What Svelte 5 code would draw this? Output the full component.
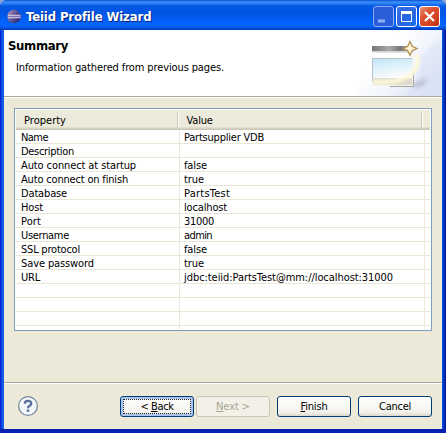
<script>
  const rows = [
    ['Name', 27, 'Partsupplier VDB', 80],
    ['Description', 53, '', 0],
    ['Auto connect at startup', 115, 'false', 23],
    ['Auto connect on finish', 107, 'true', 20],
    ['Database', 46, 'PartsTest', 46],
    ['Host', 22, 'localhost', 43],
    ['Port', 20, '31000', 30],
    ['Username', 48, 'admin', 28],
    ['SSL protocol', 59, 'false', 23],
    ['Save password', 73, 'true', 20],
    ['URL', 19, 'jdbc:teiid:PartsTest@mm://localhost:31000', 209],
    ['', 0, '', 0],
    ['', 0, '', 0],
    ['', 0, '', 0]
  ];

  // Tightens the tracking of a label so that it takes the given width.
  function fit(node, width) {
    const natural = node.getBoundingClientRect().width;
    const count = node.textContent.length;
    if (count && width) node.style.letterSpacing = (width - natural) / count + 'px';
  }
</script>

<div class="window">
  <header class="titlebar">
    <svg class="logo" width="15" height="15" viewBox="0 0 15 15">
      <defs>
        <linearGradient id="ball" x1="0" y1="0" x2="1" y2="0.6">
          <stop offset="0" stop-color="#c9a8c0" />
          <stop offset="0.4" stop-color="#75649f" />
          <stop offset="1" stop-color="#2c2877" />
        </linearGradient>
      </defs>
      <circle cx="7" cy="7.5" r="6.7" fill="url(#ball)" />
      <path d="M1 6.2H13.6M1 8.8H13.6" stroke="#e4e0f4" stroke-width="1.1" />
      <path d="M.5 7.5H14" stroke="#7970b5" stroke-width="1" />
    </svg>
    <span class="caption"><span use:fit={125}>Teiid Profile Wizard</span></span>
    <div class="controls">
      <span class="ctl dim"><svg width="19" height="19"><path d="M4 12.5h7v3H4z" fill="#8fb0f4" /></svg></span>
      <span class="ctl"><svg width="19" height="19"><path d="M4.5 5h10v9.5h-10z" fill="none" stroke="#fff" /><path d="M4 4h11v3H4z" fill="#fff" /></svg></span>
      <span class="ctl close"><svg width="19" height="19"><path d="M5 5L14 14M14 5L5 14" stroke="#fff" stroke-width="2.2" /></svg></span>
    </div>
  </header>

  <main>
    <section class="banner">
      <div class="words">
        <h1><span use:fit={60}>Summary</span></h1>
        <p><span use:fit={208}>Information gathered from previous pages.</span></p>
      </div>
      <svg class="art" width="88" height="66" viewBox="354 30 88 66">
        <defs>
          <linearGradient id="sweep" x1="0.1" y1="0.1" x2="1" y2="0.7">
            <stop offset="0.3" stop-color="#fff" />
            <stop offset="0.65" stop-color="#f1f4fc" />
            <stop offset="1" stop-color="#dde4f5" />
          </linearGradient>
          <linearGradient id="bar">
            <stop offset="0" stop-color="#777" />
            <stop offset="0.45" stop-color="#aaa" />
            <stop offset="0.75" stop-color="#777" />
            <stop offset="1" stop-color="#c8c4b4" />
          </linearGradient>
          <linearGradient id="pane" x1="0" y1="0" x2="0.3" y2="1">
            <stop offset="0" stop-color="#c2e6f5" />
            <stop offset="1" stop-color="#fbfdfe" />
          </linearGradient>
          <filter id="soft" x="-30%" y="-30%" width="160%" height="160%"><feGaussianBlur stdDeviation="2" /></filter>
          <filter id="less" x="-20%" y="-30%" width="140%" height="160%"><feGaussianBlur stdDeviation="1" /></filter>
        </defs>
        <path d="M354 30H442V96H354Z" fill="url(#sweep)" />
        <path d="M420 60Q428 44 448 38V102H396Q420 84 420 60Z" fill="#d6dff4" opacity="0.5" filter="url(#soft)" />
        <path d="M412 85L428 77L424 85L414 88Z" fill="#8f98ad" opacity="0.5" filter="url(#soft)" />
        <path d="M372 46H413V86H372Z" fill="#f3f3f1" />
        <path d="M372 46H410V51H372Z" fill="url(#bar)" />
        <path d="M372 51H410V52.5H372Z" fill="#d3d3d3" />
        <path d="M372 53H412V58H372Z" fill="#fff" />
        <path d="M373 59H412V79H373Z" fill="url(#pane)" />
        <path d="M372.5 58V82M372 58.5H412" fill="none" stroke="#b5c3c9" />
        <path d="M373 78H412V85H373Z" fill="#dedacd" />
        <path d="M390 86.5H413.5V72" fill="none" stroke="#a5a5a0" />
        <path d="M416 54Q421 69 407 77Q393 84 373 82" fill="none" stroke="#fffbe0" stroke-width="5" opacity="0.85" filter="url(#less)" />
        <path d="M418.5 56Q420 71 405 79Q391 85 375 83.5" fill="none" stroke="#f2e9a8" stroke-width="1.5" stroke-dasharray="2 2" opacity="0.55" />
        <path d="M410 41.5L412.3 46.2L417 48.5L412.3 50.8L410 55.5L407.7 50.8L403 48.5L407.7 46.2Z" fill="#fff3d6" stroke="#a98643" stroke-width="1.2" />
      </svg>
    </section>

    <section class="body">
      <div class="table">
        <div class="thead">
          <div class="th first"><span use:fit={42}>Property</span></div>
          <div class="th second"><span use:fit={26}>Value</span></div>
          <div class="th"></div>
        </div>
        <div class="rows">
          {#each rows as [name, nameWidth, value, valueWidth]}
            <div class="row">
              <div class="cell first"><span use:fit={nameWidth}>{name}</span></div>
              <div class="cell second"><span use:fit={valueWidth}>{value}</span></div>
            </div>
          {/each}
        </div>
      </div>
    </section>

    <footer>
      <svg class="help" width="22" height="22" viewBox="0 0 22 22">
        <circle cx="11" cy="11" r="9.4" fill="#f4f6fa" stroke="#7183a0" stroke-width="1.2" />
        <path d="M7.8 8.8Q7.8 5.8 11 5.8Q14.2 5.8 14.2 8.4Q14.2 9.9 12.6 10.8Q11 11.6 11 13.2" fill="none" stroke="#596f99" stroke-width="2.3" />
        <path d="M9.7 14.5h2.6v2.3H9.7z" fill="#596f99" />
      </svg>
      <button class="focused"><span use:fit={33}>&lt; <u>B</u>ack</span></button>
      <button class="next" disabled><span use:fit={34}><u>N</u>ext &gt;</span></button>
      <button class="finish"><span use:fit={27}><u>F</u>inish</span></button>
      <button><span use:fit={32}>Cancel</span></button>
    </footer>
  </main>
</div>

<style>
  :global(body) {
    margin: 0;
    background: #8fa6dc;
  }
  .window {
    box-sizing: border-box;
    width: 446px;
    height: 433px;
    display: flex;
    flex-direction: column;
    padding: 0 4px 4px;
    border-radius: 7px 7px 0 0;
    overflow: hidden;
    background: linear-gradient(90deg, #0019cf 0, #0831d9 1px, #166aee 3px, #0855dd 4px, #0855dd 442px, #0144d0 443px, #001fa8 445px, #00138c 446px);
    font: 11px/14px 'DejaVu Sans Condensed', 'DejaVu Sans', sans-serif;
    font-stretch: condensed;
    color: #000;
    box-shadow: inset 0 -4px #0522b4;
    white-space: nowrap;
  }
  .titlebar {
    height: 30px;
    flex: none;
    margin: 0 -4px;
    padding: 0 6px 0 7px;
    box-sizing: border-box;
    display: flex;
    align-items: center;
    background: linear-gradient(#0b4fd0 0, #3b90fb 2px, #2479f3 4px, #0359e4 6px, #0054e3 13px, #0360f8 21px, #0567ff 26px, #0350dc 28px, #003bbd 30px);
  }
  .logo {
    margin-top: 2px;
  }
  .caption {
    margin: 4px auto 0 4px;
    color: #fff;
    font: bold 13px/18px 'DejaVu Sans Condensed', 'DejaVu Sans', sans-serif;
    font-stretch: condensed;
    text-shadow: 1px 1px #0a2478;
  }
  .controls {
    display: flex;
    gap: 2px;
    margin-top: 3px;
  }
  .ctl {
    width: 19px;
    height: 19px;
    border: 1px solid #fff;
    border-radius: 3px;
    background: radial-gradient(circle at 80% 85%, #1e6df0, #2b63de 50%, #3b74e6);
  }
  .ctl svg {
    display: block;
  }
  .dim {
    border-color: #8aabed;
    background: #2a5edb;
  }
  .close {
    background: linear-gradient(135deg, #ea967c, #dc5332 35%, #d2411d 75%, #b83210);
  }
  main {
    flex: 1;
    display: flex;
    flex-direction: column;
    background: #ece9d8;
  }
  .banner {
    height: 66px;
    display: flex;
    justify-content: space-between;
    background: #fff;
    border-bottom: 1px solid #aca899;
    box-shadow: 0 1px #fff;
  }
  .words {
    padding: 8px 0 0 4px;
  }
  h1 {
    margin: 0;
    font: bold 13px/16px 'DejaVu Sans Condensed', 'DejaVu Sans', sans-serif;
    font-stretch: condensed;
  }
  p {
    margin: 7px 0 0 8px;
  }
  .body {
    flex: 1;
    padding: 11px 10px 0;
  }
  .table {
    box-sizing: border-box;
    height: 223px;
    border: 1px solid #7f9db9;
    padding: 1px;
    background: #fff;
  }
  .thead {
    height: 20px;
    display: flex;
    background: linear-gradient(#ebeadb 0 17px, #e2decd 17px 18px, #d6d2c2 18px 19px, #cbc7b8 19px);
  }
  .th {
    box-sizing: border-box;
    height: 14px;
    margin-top: 3px;
    padding-left: 8px;
    line-height: 16px;
  }
  .th.first {
    width: 162px;
    border-right: 1px solid #c5c2b2;
    box-shadow: 1px 0 #fff;
  }
  .th.second {
    width: 245px;
    padding-left: 9px;
    border-right: 1px solid #c5c2b2;
    box-shadow: 1px 0 #fff;
  }
  .rows {
    height: 199px;
    background: linear-gradient(90deg, transparent 163px, #ece9d8 163px 164px, transparent 164px 408px, #ece9d8 408px 409px, transparent 409px);
  }
  .row {
    box-sizing: border-box;
    height: 14px;
    display: flex;
    border-bottom: 1px solid #e9e6d6;
  }
  .cell {
    box-sizing: border-box;
    padding-left: 5px;
    line-height: 16px;
  }
  .cell.first {
    width: 163px;
  }
  footer {
    height: 47px;
    display: flex;
    align-items: center;
    box-sizing: border-box;
    padding: 1px 10px 0 13px;
    border-top: 1px solid #aca899;
    box-shadow: inset 0 1px #fff;
  }
  .help {
    margin: -2px auto 0 0;
  }
  button {
    box-sizing: border-box;
    width: 74px;
    height: 21px;
    padding: 1px 0 0;
    border: 1px solid #003c74;
    border-radius: 3px;
    background: linear-gradient(#fff, #f3f2ec 80%, #dcd7cb);
    font: inherit;
    color: #000;
  }
  .focused {
    outline: 1px dotted #222;
    outline-offset: -4px;
    box-shadow: inset 0 0 0 2px #a9c4f0;
  }
  .next {
    margin: 0 7px 0 2px;
    border-color: #c9c7ba;
    background: #f3f1e7;
    color: #a6a392;
  }
  .finish {
    margin-right: 7px;
  }
  u {
    text-underline-offset: 1px;
  }
</style>
